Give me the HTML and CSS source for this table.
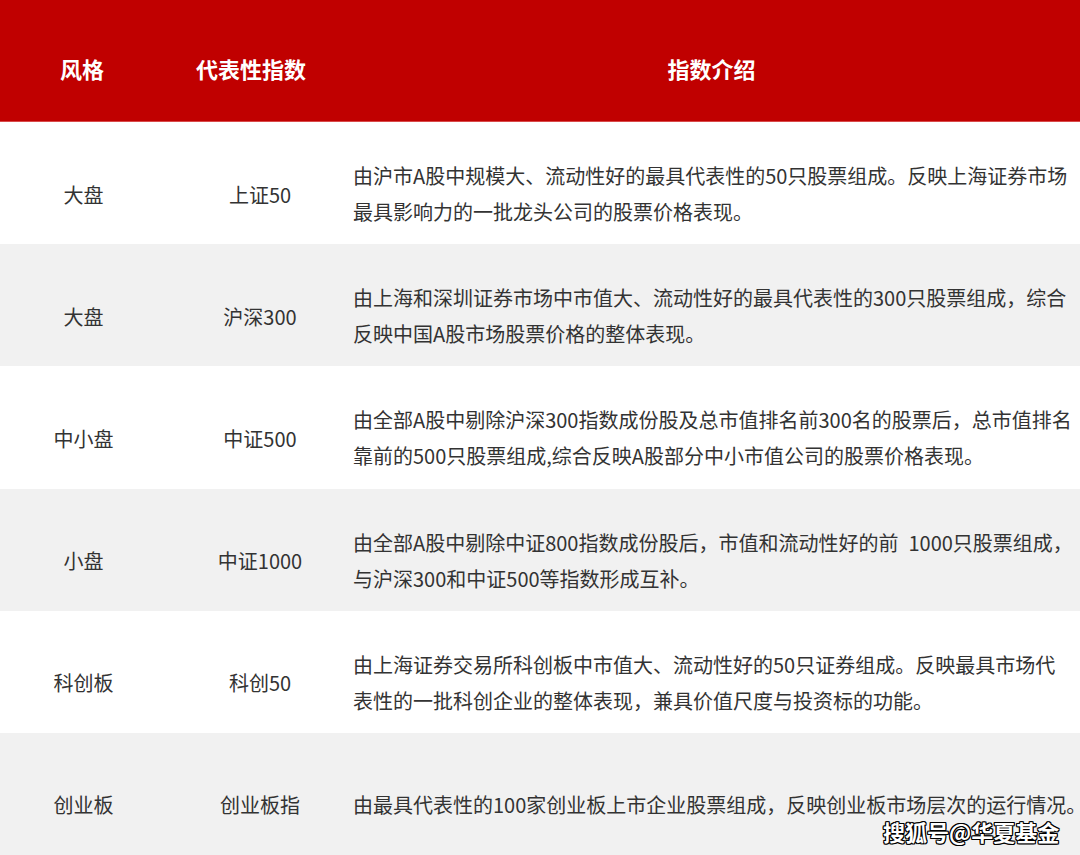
FILE: index.html
```html
<!DOCTYPE html>
<html lang="zh">
<head>
<meta charset="utf-8">
<link rel="stylesheet" href="styles.css">
</head>
<body>
<div class="table">
  <div class="row head">
    <div class="c1">风格</div>
    <div class="c2">代表性指数</div>
    <div class="c3">指数介绍</div>
  </div>
  <div class="row">
    <div class="c1">大盘</div>
    <div class="c2">上证50</div>
    <div class="c3">由沪市A股中规模大、流动性好的最具代表性的50只股票组成。反映上海证券市场<br>最具影响力的一批龙头公司的股票价格表现。</div>
  </div>
  <div class="row alt">
    <div class="c1">大盘</div>
    <div class="c2">沪深300</div>
    <div class="c3">由上海和深圳证券市场中市值大、流动性好的最具代表性的300只股票组成，综合<br>反映中国A股市场股票价格的整体表现。</div>
  </div>
  <div class="row">
    <div class="c1">中小盘</div>
    <div class="c2">中证500</div>
    <div class="c3">由全部A股中剔除沪深300指数成份股及总市值排名前300名的股票后，总市值排名<br>靠前的500只股票组成,综合反映A股部分中小市值公司的股票价格表现。</div>
  </div>
  <div class="row alt">
    <div class="c1">小盘</div>
    <div class="c2">中证1000</div>
    <div class="c3">由全部A股中剔除中证800指数成份股后，市值和流动性好的前&ensp;1000只股票组成，<br>与沪深300和中证500等指数形成互补。</div>
  </div>
  <div class="row">
    <div class="c1">科创板</div>
    <div class="c2">科创50</div>
    <div class="c3">由上海证券交易所科创板中市值大、流动性好的50只证券组成。反映最具市场代<br>表性的一批科创企业的整体表现，兼具价值尺度与投资标的功能。</div>
  </div>
  <div class="row alt">
    <div class="c1">创业板</div>
    <div class="c2">创业板指</div>
    <div class="c3 single">由最具代表性的100家创业板上市企业股票组成，反映创业板市场层次的运行情况。</div>
  </div>
</div>
<div class="watermark">搜狐号@华夏基金</div>
</body>
</html>
```

FILE: styles.css
```css
html, body {
  margin: 0;
  padding: 0;
  width: 1080px;
  height: 855px;
  overflow: hidden;
  background: #ffffff;
  font-family: "Noto Sans CJK SC", "Noto Sans", sans-serif;
}
.table {
  display: flex;
  flex-direction: column;
  width: 1080px;
}
.row {
  display: grid;
  grid-template-columns: 167px 186px 1fr;
  align-items: center;
  height: 122.14px;
  box-sizing: border-box;
  padding-top: 22px;
  color: #333333;
  font-size: 20px;
  background: #ffffff;
}
.row.alt {
  background: #f1f1f1;
}
.row.head {
  background: #c00000;
  color: #ffffff;
  font-weight: bold;
  font-size: 22px;
  padding-top: 14px;
  border-bottom: 1px solid #d94a4a;
}
.c1, .c2 {
  text-align: center;
}
.head .c1 {
  padding-right: 3px;
}
.head .c2 {
  padding-right: 18px;
}
.head .c3 {
  text-align: center;
  margin-left: -10px;
}
.c3 {
  white-space: nowrap;
  line-height: 36px;
}
.c3.single {
  line-height: 24px;
}
.watermark {
  position: absolute;
  left: 883px;
  top: 820px;
  font-size: 22px;
  line-height: 22px;
  font-weight: bold;
  color: #ffffff;
  text-shadow: 1px 1px 0 #000, -1px -1px 0 #000, 1px -1px 0 #000, -1px 1px 0 #000, 0 1px 0 #000, 0 -1px 0 #000, 1px 0 0 #000, -1px 0 0 #000;
}
```
